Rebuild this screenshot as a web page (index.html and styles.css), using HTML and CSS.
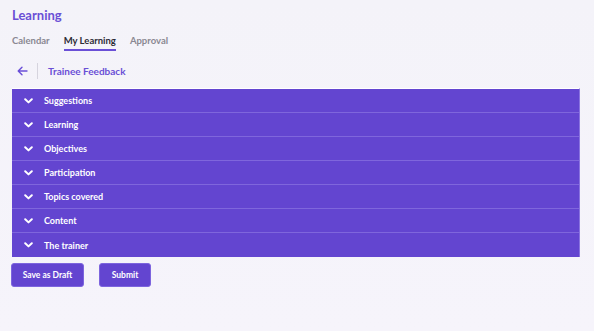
FILE: index.html
```html
<!DOCTYPE html>
<html lang="en">
<head>
<meta charset="utf-8">
<link rel="stylesheet" href="styles.css">
</head>
<body>
<div class="page">
  <h1 class="title">Learning</h1>
  <nav class="tabs">
    <span class="tab">Calendar</span>
    <span class="tab active">My Learning</span>
    <span class="tab">Approval</span>
  </nav>
  <div class="back-row">
    <svg class="back" width="11" height="10" viewBox="0 0 11 10"><path d="M10 5H1.5M5 1.2L1.2 5 5 8.8" fill="none" stroke="#6a4fd8" stroke-width="1.4" stroke-linecap="round" stroke-linejoin="round"/></svg>
    <span class="divider"></span>
    <span class="crumb">Trainee Feedback</span>
  </div>
  <div class="accordion">
    <div class="row"><svg class="chev" width="9" height="6" viewBox="0 0 9 6"><path d="M1.2 1.2L4.5 4.4 7.8 1.2" fill="none" stroke="#fff" stroke-width="2" stroke-linecap="round" stroke-linejoin="round"/></svg><span>Suggestions</span></div>
    <div class="row"><svg class="chev" width="9" height="6" viewBox="0 0 9 6"><path d="M1.2 1.2L4.5 4.4 7.8 1.2" fill="none" stroke="#fff" stroke-width="2" stroke-linecap="round" stroke-linejoin="round"/></svg><span>Learning</span></div>
    <div class="row"><svg class="chev" width="9" height="6" viewBox="0 0 9 6"><path d="M1.2 1.2L4.5 4.4 7.8 1.2" fill="none" stroke="#fff" stroke-width="2" stroke-linecap="round" stroke-linejoin="round"/></svg><span>Objectives</span></div>
    <div class="row"><svg class="chev" width="9" height="6" viewBox="0 0 9 6"><path d="M1.2 1.2L4.5 4.4 7.8 1.2" fill="none" stroke="#fff" stroke-width="2" stroke-linecap="round" stroke-linejoin="round"/></svg><span>Participation</span></div>
    <div class="row"><svg class="chev" width="9" height="6" viewBox="0 0 9 6"><path d="M1.2 1.2L4.5 4.4 7.8 1.2" fill="none" stroke="#fff" stroke-width="2" stroke-linecap="round" stroke-linejoin="round"/></svg><span>Topics covered</span></div>
    <div class="row"><svg class="chev" width="9" height="6" viewBox="0 0 9 6"><path d="M1.2 1.2L4.5 4.4 7.8 1.2" fill="none" stroke="#fff" stroke-width="2" stroke-linecap="round" stroke-linejoin="round"/></svg><span>Content</span></div>
    <div class="row"><svg class="chev" width="9" height="6" viewBox="0 0 9 6"><path d="M1.2 1.2L4.5 4.4 7.8 1.2" fill="none" stroke="#fff" stroke-width="2" stroke-linecap="round" stroke-linejoin="round"/></svg><span>The trainer</span></div>
  </div>
  <div class="actions">
    <button class="btn draft">Save as Draft</button>
    <button class="btn submit">Submit</button>
  </div>
</div>
</body>
</html>
```
FILE: styles.css
```css
html, body {
  margin: 0;
  padding: 0;
}
body {
  width: 594px;
  height: 331px;
  overflow: hidden;
  background: linear-gradient(180deg, #f4f3f9 0%, #f6f4fb 100%);
  font-family: Lato, "Open Sans", sans-serif;
}
.page {
  padding: 7px 14px 0 12px;
}
.title {
  margin: 0;
  font-size: 13px;
  font-weight: 700;
  color: #6a4fd6;
  line-height: 16px;
}
.tabs {
  display: flex;
  gap: 14px;
  margin-top: 11px;
  height: 19px;
}
.tab {
  font-size: 9.5px;
  font-weight: 700;
  color: #8a8892;
  line-height: 13px;
}
.tab.active {
  color: #2d2b36;
  border-bottom: 2px solid #6a4fd6;
  height: 15px;
}
.back-row {
  display: flex;
  align-items: center;
  height: 16px;
  margin-top: 10px;
  padding-left: 5px;
}
.back {
  display: block;
}
.divider {
  width: 1px;
  height: 16px;
  background: #d6d4de;
  margin-left: 9px;
  margin-right: 10px;
}
.crumb {
  font-size: 10px;
  font-weight: 700;
  color: #6a4fd6;
}
.accordion {
  margin-top: 9px;
  border-top: 1px solid #ffffff;
  border-right: 1px solid #8a74e0;
  background: #6345d0;
}
.row {
  display: flex;
  align-items: center;
  height: 23px;
  border-bottom: 1px solid #7f66dc;
  padding-left: 12px;
  color: #ffffff;
  font-size: 9px;
  font-weight: 700;
}
.row:last-child {
  border-bottom: 0;
  height: 24px;
}
.chev {
  display: block;
  margin-right: 11px;
}
.actions {
  display: flex;
  gap: 15px;
  margin-top: 6px;
  margin-left: -1px;
}
.btn {
  height: 24px;
  border: 1px solid #7d65de;
  border-radius: 3px;
  background: #6345d0;
  color: #ffffff;
  font-family: Lato, "Open Sans", sans-serif;
  font-size: 8.5px;
  font-weight: 700;
  padding: 0;
}
.draft { width: 73px; }
.submit { width: 52px; }
```
